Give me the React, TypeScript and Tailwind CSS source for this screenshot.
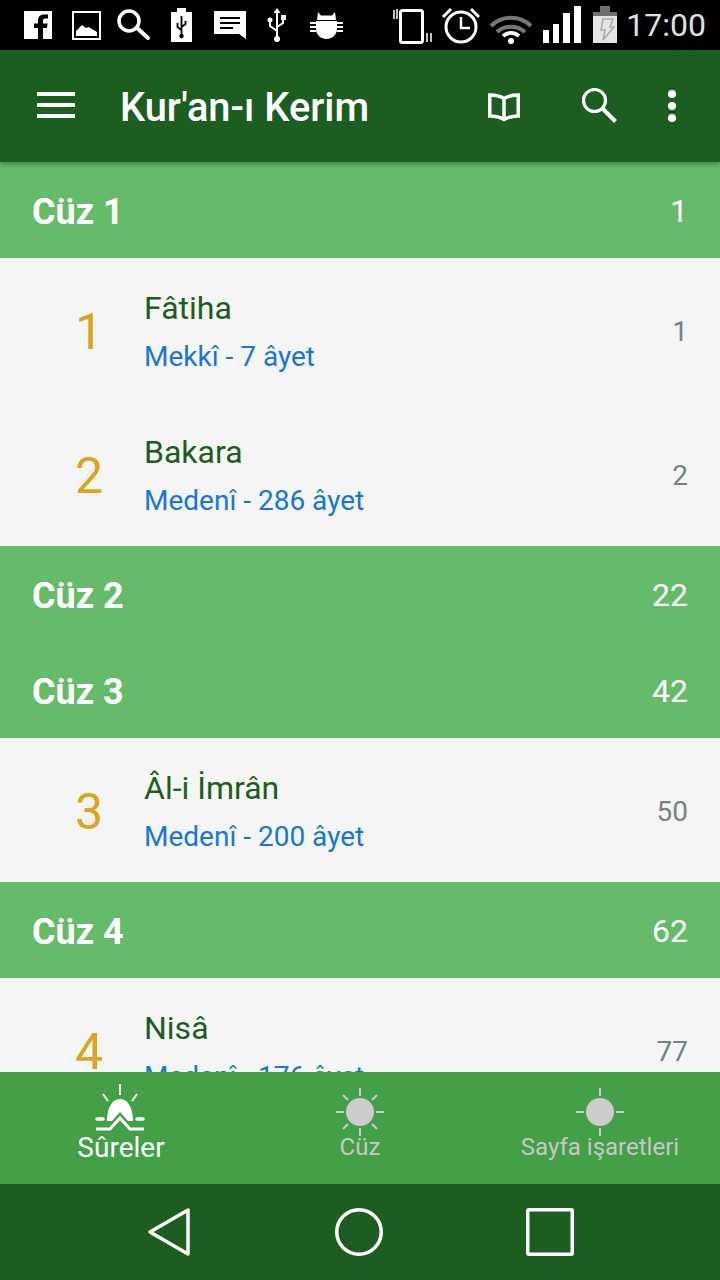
type Surah = { no: number; name: string; info: string; page: number };

function SectionRow({ title, page }: { title: string; page: number }) {
  return (
    <div className="flex h-[96px] shrink-0 items-center justify-between bg-[#66bb6a] px-8 text-white">
      <span className="pt-[4px] text-[36px] font-bold">{title}</span>
      <span className="pt-[2px] text-[32px]">{page}</span>
    </div>
  );
}

function SurahRow({ no, name, info, page }: Surah) {
  return (
    <div className="flex h-[144px] shrink-0 items-center bg-[#f5f5f5] pr-8">
      <div className="w-[144px] pl-[34px] pt-[4px] text-center text-[50px] leading-none text-[#daa520]">{no}</div>
      <div className="flex flex-1 flex-col pt-[4px]">
        <span className="text-[32px] leading-[48px] text-[#1b5e20]">{name}</span>
        <span className="mt-[1px] text-[28px] leading-[48px] text-[#1976d2]">{info}</span>
      </div>
      <span className="pt-[4px] text-[28px] text-[#78808a]">{page}</span>
    </div>
  );
}

function StatusIcons() {
  return (
    <svg width="720" height="50" viewBox="0 0 720 50" className="absolute left-0 top-0">
      {/* facebook */}
      <path fill="#fff" d="M24 11h28v28H43V28h4l.6-4.500H43v-3c0-1.300.5-2 2-2h3v-4h-4c-4 0-6 2.300-6 5.800v3.200h-4V28h4v11H24z" />
      {/* picture */}
      <rect x="73" y="12" width="27" height="27" fill="none" stroke="#fff" strokeWidth="2" />
      <path fill="#fff" d="M76 36v-5l6-6 4 3 3-1 3 2 5 3v4z" />
      {/* magnifier */}
      <circle cx="129" cy="21" r="10" fill="none" stroke="#fff" strokeWidth="3.500" />
      <path d="M137 28l11 10" stroke="#fff" strokeWidth="4" strokeLinecap="round" />
      {/* battery usb */}
      <path fill="#fff" d="M171 12h6V8h9v4h6v30h-21z" />
      <path d="M181.500 16v20M181.500 30l-4-3v-4M181.500 27l4-3v-3" stroke="#000" strokeWidth="1.800" fill="none" />
      <circle cx="181.500" cy="36" r="2.200" fill="#000" />
      {/* message */}
      <path fill="#fff" d="M214 11h32v28l-7-5h-25z" />
      <path d="M220 18h20M220 23h20M220 28h13" stroke="#000" strokeWidth="2" />
      {/* usb */}
      <path d="M277 11v28M277 31l-7-5v-5M277 27l6-4v-5" stroke="#fff" strokeWidth="2" fill="none" />
      <path fill="#fff" d="M277 8l3.500 5h-7zM281 15h5v5h-5z" />
      <circle cx="270" cy="20" r="2.500" fill="#fff" />
      <circle cx="277" cy="39" r="3" fill="#fff" />
      {/* bug */}
      <path fill="#fff" d="M318 12l3 3.500h11l3-3.500 1 8h-19zM316 21h21v8c0 6-5 10-10.500 10S316 35 316 29z" />
      <path d="M310 23h6M310 27h6M310 31h6M337 23h6M337 27h6M337 31h6" stroke="#fff" strokeWidth="2" />
      {/* vibrate */}
      <rect x="400.500" y="10.500" width="22" height="32" rx="2" fill="none" stroke="#fff" strokeWidth="3" />
      <path d="M394 10v9M427 33v9M431 33v9" stroke="#fff" strokeWidth="1.500" />
      <path d="M397 9v10" stroke="#fff" strokeWidth="1.500" />
      {/* alarm */}
      <circle cx="461" cy="27" r="15" fill="none" stroke="#fff" strokeWidth="3" />
      <path d="M461 17v11h9" fill="none" stroke="#fff" strokeWidth="2.500" />
      <path d="M443 17l8-8M479 17l-8-8" stroke="#fff" strokeWidth="3" />
      {/* wifi */}
      <path d="M491 26c11-11 29-11 40 0" fill="none" stroke="#777" strokeWidth="4" />
      <path d="M497 32c8-7 20-7 28 0" fill="none" stroke="#777" strokeWidth="4" />
      <path d="M503 36c5-4 11-4 16 0" fill="none" stroke="#fff" strokeWidth="4" />
      <circle cx="511" cy="41" r="3" fill="#fff" />
      {/* signal */}
      <path fill="#fff" d="M543 30h6v13h-6zM553 24h6v19h-6zM563 13h7v30h-7zM574 6h7v37h-7z" />
      {/* battery */}
      <path fill="#6f6f6f" d="M593 12h7V6h10v6h7v4h-24z" />
      <rect x="593" y="16" width="24" height="27" fill="#e4e4e4" />
      <path d="M603 19h10l-3 8h4l-11 13 2-10h-4z" fill="none" stroke="#aaa" strokeWidth="1.500" />
    </svg>
  );
}

function SunIcon({ full }: { full: boolean }) {
  return (
    <svg width="50" height="50" viewBox="0 0 50 50" className="block">
      <circle cx="25" cy="25" r="14" fill="#cccccc" />
      <path
        d={
          full
            ? "M25 1v8M25 41v8M1 25h8M41 25h8M8 8l5 5M42 8l-5 5M8 42l5-5M42 42l-5-5"
            : "M25 1v8M25 41v8M1 25h8M41 25h8"
        }
        stroke="#cccccc"
        strokeWidth="2"
      />
    </svg>
  );
}

function SunriseIcon() {
  return (
    <svg width="50" height="50" viewBox="0 0 50 50" className="block">
      <path d="M25 0v11M8 10l5 7M42 10l-5 7" stroke="#fff" strokeWidth="2" />
      <path fill="#fff" d="M12 37C12 24 17 15 25 15S38 24 38 37h-5l-8-9-8 9z" />
      <path d="M2 35h6M42 35h6" stroke="#fff" strokeWidth="3.500" strokeLinecap="round" />
      <path d="M1 45h14l10-11 10 11h14" fill="none" stroke="#fff" strokeWidth="3" />
    </svg>
  );
}

export default function App() {
  return (
    <div className="flex h-[1280px] w-[720px] flex-col overflow-hidden bg-[#f5f5f5] font-['Roboto',sans-serif]">
      <div className="relative h-[50px] shrink-0 bg-black">
        <StatusIcons />
        <span className="absolute right-[14px] top-[4px] text-[32px] leading-[42px] text-[#e0e0e0]">17:00</span>
      </div>

      <header className="relative z-10 flex h-[112px] shrink-0 items-center bg-[#1b5e20] text-white shadow-[0_2px_5px_rgba(0,0,0,0.35)]">
        <svg width="38" height="26" viewBox="0 0 38 26" className="ml-[37px] mt-[-2px] shrink-0">
          <path fill="#fff" d="M0 0h38v4H0zM0 11h38v4H0zM0 22h38v4H0z" />
        </svg>
        <h1 className="ml-[45px] flex-1 pt-[4px] text-[39.8px] font-medium leading-[56px]">Kur'an-ı Kerim</h1>
        <svg width="32" height="29" viewBox="0 0 32 29" className="mr-[62px] mt-[3px]">
          <path d="M16 5.500C12 3 7 2 1.750 2v21c5 0 10 1 14.250 3.500 4.250-2.500 9.250-3.500 14.250-3.500V2C25 2 20 3 16 5.500zM16 5.500V26" fill="none" stroke="#fff" strokeWidth="3.500" />
        </svg>
        <svg width="36" height="36" viewBox="0 0 36 36" className="mr-[48px]">
          <circle cx="12.500" cy="12.500" r="11" fill="none" stroke="#fff" strokeWidth="3.200" />
          <path d="M20 20l13.500 13.500" stroke="#fff" strokeWidth="4" />
        </svg>
        <svg width="12" height="36" viewBox="0 0 12 36" className="mr-[42px]">
          <circle cx="6" cy="6" r="4" fill="#fff" />
          <circle cx="6" cy="18" r="4" fill="#fff" />
          <circle cx="6" cy="30" r="4" fill="#fff" />
        </svg>
      </header>

      <main className="flex min-h-0 flex-1 flex-col overflow-hidden">
        <SectionRow title="Cüz 1" page={1} />
        <SurahRow no={1} name="Fâtiha" info="Mekkî - 7 âyet" page={1} />
        <SurahRow no={2} name="Bakara" info="Medenî - 286 âyet" page={2} />
        <SectionRow title="Cüz 2" page={22} />
        <SectionRow title="Cüz 3" page={42} />
        <SurahRow no={3} name="Âl-i İmrân" info="Medenî - 200 âyet" page={50} />
        <SectionRow title="Cüz 4" page={62} />
        <SurahRow no={4} name="Nisâ" info="Medenî - 176 âyet" page={77} />
      </main>

      <nav className="flex h-[112px] shrink-0 bg-[#43a047]">
        <div className="flex w-[240px] flex-col items-center pt-[12px] text-[28px] leading-[32px] text-white">
          <SunriseIcon />
          <span className="-mt-[2px] pl-[2px]">Sûreler</span>
        </div>
        <div className="flex w-[240px] flex-col items-center pt-[15px] text-[24px] leading-[32px] text-[#c8c8c8]">
          <SunIcon full />
          <span className="-mt-[6px]">Cüz</span>
        </div>
        <div className="flex w-[240px] flex-col items-center pt-[15px] text-[24px] leading-[32px] text-[#c8c8c8]">
          <SunIcon full={false} />
          <span className="-mt-[6px]">Sayfa işaretleri</span>
        </div>
      </nav>

      <div className="flex h-[96px] shrink-0 items-center gap-[143px] bg-[#1b5e20] pl-[146px]">
        <svg width="46" height="52" viewBox="0 0 46 52">
          <path d="M42 4v44L4 26z" fill="none" stroke="#fff" strokeWidth="3.500" strokeLinejoin="round" />
        </svg>
        <svg width="48" height="48" viewBox="0 0 48 48">
          <circle cx="24" cy="24" r="22.250" fill="none" stroke="#fff" strokeWidth="3.500" />
        </svg>
        <svg width="48" height="48" viewBox="0 0 48 48">
          <rect x="1.750" y="1.750" width="44.500" height="44.500" rx="1" fill="none" stroke="#fff" strokeWidth="3.500" />
        </svg>
      </div>
    </div>
  );
}
